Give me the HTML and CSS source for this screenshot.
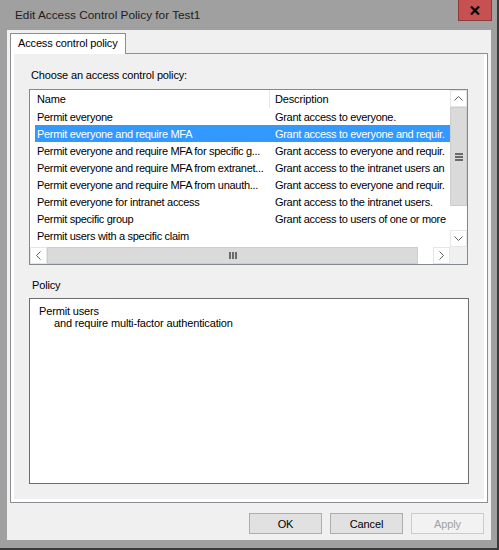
FILE: index.html
```html
<!DOCTYPE html>
<html>
<head>
<meta charset="utf-8">
<link rel="stylesheet" href="styles.css">
</head>
<body>
<div class="window">
  <div class="titlebar">
    <span class="title">Edit Access Control Policy for Test1</span>
    <div class="close"><svg width="10" height="9" viewBox="0 0 10 9"><path d="M1 0.5 L9 8.5 M9 0.5 L1 8.5" stroke="#000" stroke-width="2.2" fill="none"/></svg></div>
  </div>
  <div class="client">
    <div class="tabs"><div class="tab">Access control policy</div></div>
    <div class="panel">
      <div class="page">
        <div class="label">Choose an access control policy:</div>
        <div class="list">
          <div class="list-body">
            <div class="header"><div class="hcol hname">Name</div><div class="hcol hdesc">Description</div></div>
            <div class="row"><div class="c name">Permit everyone</div><div class="c desc">Grant access to everyone.</div></div>
            <div class="row selected"><div class="c name">Permit everyone and require MFA</div><div class="c desc">Grant access to everyone and requir.</div></div>
            <div class="row"><div class="c name">Permit everyone and require MFA for specific g...</div><div class="c desc">Grant access to everyone and requir.</div></div>
            <div class="row"><div class="c name">Permit everyone and require MFA from extranet...</div><div class="c desc">Grant access to the intranet users an</div></div>
            <div class="row"><div class="c name">Permit everyone and require MFA from unauth...</div><div class="c desc">Grant access to everyone and requir.</div></div>
            <div class="row"><div class="c name">Permit everyone for intranet access</div><div class="c desc">Grant access to the intranet users.</div></div>
            <div class="row"><div class="c name">Permit specific group</div><div class="c desc">Grant access to users of one or more</div></div>
            <div class="row"><div class="c name">Permit users with a specific claim</div><div class="c desc"></div></div>
          </div>
          <div class="vscroll">
            <div class="arrow"><svg width="9" height="5" viewBox="0 0 9 5"><path d="M0.5 4.5 L4.5 0.5 L8.5 4.5" fill="none" stroke="#606060"/></svg></div>
            <div class="thumb vthumb"><svg width="8" height="8" viewBox="0 0 8 8"><rect x="0" y="0" width="8" height="2" fill="#6a6a6a"/><rect x="0" y="3" width="8" height="2" fill="#6a6a6a"/><rect x="0" y="6" width="8" height="2" fill="#6a6a6a"/></svg></div>
            <div class="track"></div>
            <div class="arrow"><svg width="9" height="5" viewBox="0 0 9 5"><path d="M0.5 0.5 L4.5 4.5 L8.5 0.5" fill="none" stroke="#606060"/></svg></div>
          </div>
          <div class="hscroll">
            <div class="arrow"><svg width="5" height="9" viewBox="0 0 5 9"><path d="M4.5 0.5 L0.5 4.5 L4.5 8.5" fill="none" stroke="#606060"/></svg></div>
            <div class="thumb hthumb"><svg width="8" height="7" viewBox="0 0 8 7"><rect x="0" y="0" width="2" height="7" fill="#6a6a6a"/><rect x="3" y="0" width="2" height="7" fill="#6a6a6a"/><rect x="6" y="0" width="2" height="7" fill="#6a6a6a"/></svg></div>
            <div class="htrack"></div>
            <div class="arrow"><svg width="5" height="9" viewBox="0 0 5 9"><path d="M0.5 0.5 L4.5 4.5 L0.5 8.5" fill="none" stroke="#606060"/></svg></div>
          </div>
          <div class="corner"></div>
        </div>
        <div class="label policy-label">Policy</div>
        <div class="policy">
          <div>Permit users</div>
          <div class="indent">and require multi-factor authentication</div>
        </div>
      </div>
    </div>
    <div class="buttons">
      <button class="btn">OK</button>
      <button class="btn">Cancel</button>
      <button class="btn disabled">Apply</button>
    </div>
  </div>
</div>
</body>
</html>
```

FILE: styles.css
```css
* { box-sizing: border-box; }
html, body { margin: 0; padding: 0; }
body {
  width: 499px;
  height: 550px;
  overflow: hidden;
  background: #a0a0a0;
  font-family: "Liberation Sans", Arial, sans-serif;
  font-size: 11px;
  color: #000;
}
.window {
  width: 499px;
  height: 550px;
  background: #a0a0a0;
  border-right: 2px solid #3a3a3a;
  border-bottom: 2px solid #3a3a3a;
  display: flex;
  flex-direction: column;
}
.titlebar {
  height: 30px;
  flex-shrink: 0;
  display: flex;
  align-items: center;
  padding: 0 5px 0 15px;
}
.title {
  font-size: 11.8px;
  color: #1c1c1c;
}
.close {
  margin-left: auto;
  align-self: flex-start;
  width: 34px;
  height: 21px;
  background: #c75050;
  border: 1px solid #8e3a3a;
  border-top: 0;
  display: flex;
  align-items: center;
  justify-content: center;
}
.close svg { display: block; }
.client {
  margin-left: 7px;
  width: 484px;
  height: 510px;
  background: #f0f0f0;
  padding: 3px 3px 0 3px;
  display: flex;
  flex-direction: column;
  letter-spacing: -0.15px;
}
.tabs {
  display: flex;
  height: 20px;
  flex-shrink: 0;
}
.tab {
  width: 116px;
  height: 21px;
  background: #fff;
  border: 1px solid #8c8e94;
  border-bottom: 0;
  padding-left: 7px;
  line-height: 19px;
  position: relative;
  z-index: 1;
}
.panel {
  height: 450px;
  flex-shrink: 0;
  border: 1px solid #8c8e94;
  background: #fff;
  padding: 0 3px 3px 3px;
  display: flex;
}
.page {
  flex: 1;
  background: #f0f0f0;
  display: flex;
  flex-direction: column;
}
.label {
  line-height: 13px;
  padding-left: 17px;
  margin-top: 15px;
}
.policy-label {
  margin-top: 14px;
  padding-left: 18px;
}
.list {
  margin: 7px 0 0 15px;
  width: 439px;
  height: 176px;
  border: 1px solid #828790;
  background: #fff;
  display: grid;
  grid-template-columns: 420px 17px;
  grid-template-rows: 157px 17px;
}
.list-body {
  overflow: hidden;
}
.header {
  display: flex;
  height: 18px;
}
.hcol {
  line-height: 19px;
  white-space: nowrap;
}
.hname {
  width: 240px;
  padding-left: 7px;
  border-right: 1px solid #e5e5e5;
}
.hdesc {
  padding-left: 5px;
}
.row {
  display: flex;
  height: 17px;
  margin-left: 5px;
  line-height: 18px;
  letter-spacing: -0.3px;
}
.row.selected {
  background: #3399ff;
  color: #fff;
}
.c {
  white-space: nowrap;
  overflow: hidden;
}
.c.name {
  width: 234px;
  flex-shrink: 0;
  padding-left: 2px;
}
.c.desc {
  flex: 1;
  min-width: 0;
  padding-left: 6px;
}
.vscroll {
  display: flex;
  flex-direction: column;
  background: #fff;
}
.hscroll {
  display: flex;
  background: #fff;
}
.arrow {
  width: 17px;
  height: 17px;
  flex-shrink: 0;
  background: #fff;
  border: 1px solid #e6e6e6;
  display: flex;
  align-items: center;
  justify-content: center;
}
.arrow svg { display: block; }
.thumb {
  background: #dadada;
  border: 1px solid #cdcdcd;
  display: flex;
  align-items: center;
  justify-content: center;
}
.thumb svg { display: block; }
.vthumb {
  height: 99px;
  flex-shrink: 0;
}
.track { flex: 1; }
.hthumb {
  width: 371px;
  flex-shrink: 0;
}
.htrack { flex: 1; }
.corner { background: #f0f0f0; }
.policy {
  margin: 6px 0 0 15px;
  width: 440px;
  height: 186px;
  border: 1px solid #6d6d6d;
  background: #fff;
  padding: 6px 9px;
  line-height: 12px;
}
.indent { padding-left: 15px; }
.buttons {
  margin-top: 10px;
  display: flex;
  justify-content: flex-end;
  gap: 8px;
  padding-right: 4px;
}
.btn {
  appearance: none;
  -webkit-appearance: none;
  width: 73px;
  height: 21px;
  margin: 0;
  padding: 0;
  background: #e1e1e1;
  border: 1px solid #adadad;
  border-radius: 0;
  font-family: inherit;
  font-size: 11px;
  letter-spacing: -0.15px;
  color: #000;
}
.btn.disabled {
  background: #f2f2f2;
  border-color: #cccccc;
  color: #a0a0a0;
}
```
